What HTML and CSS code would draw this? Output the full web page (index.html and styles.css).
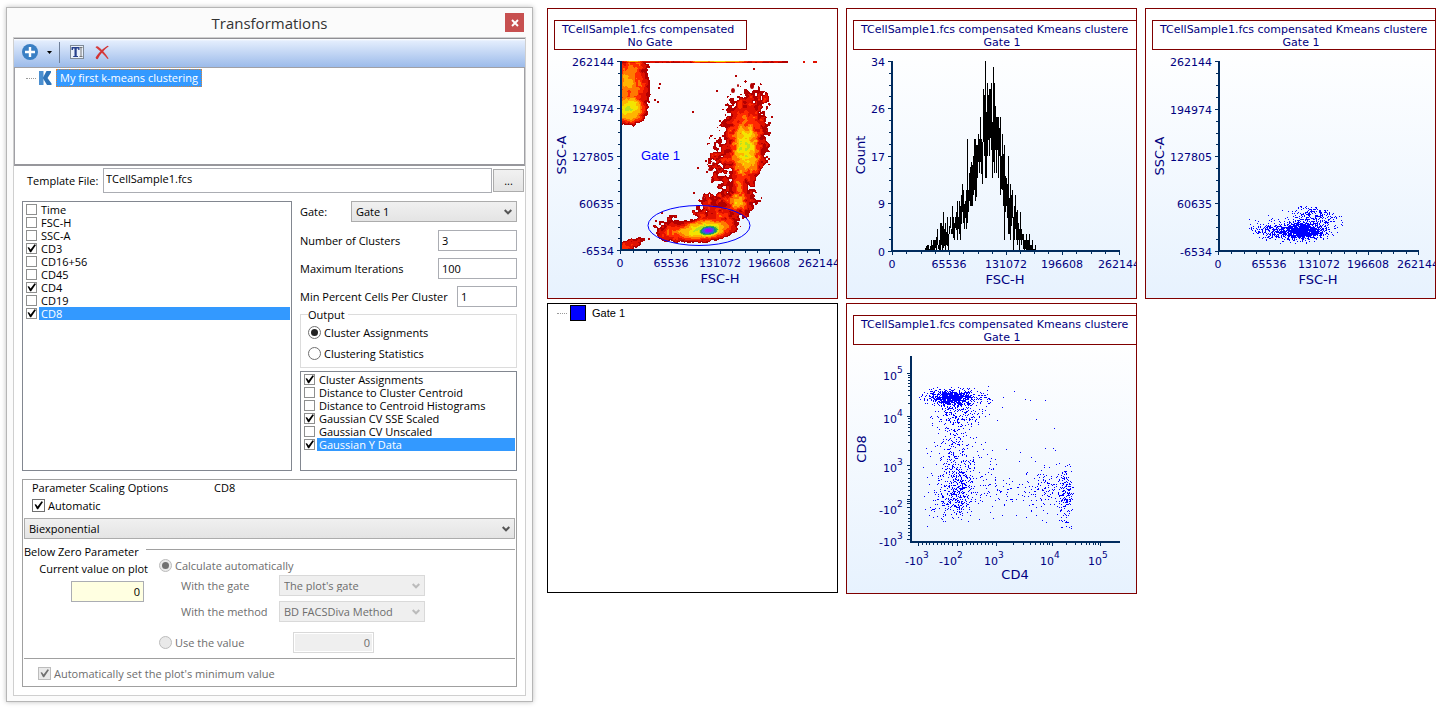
FILE: index.html
```html
<!DOCTYPE html>
<html lang="en">
<head>
<meta charset="utf-8">
<title>Transformations</title>
<link rel="stylesheet" href="styles.css">
</head>
<body>
<main class="workspace">
  <section class="window" aria-labelledby="win-title">
    <header class="titlebar">
      <h1 class="title" id="win-title">Transformations</h1>
      <button class="close" type="button" aria-label="Close">
        <svg width="8" height="8" viewBox="0 0 8 8"><path d="M1 1L7 7M7 1L1 7" stroke="#fff" stroke-width="1.9"/></svg>
      </button>
    </header>
    <div class="frame">
      <div class="toolbar">
        <button class="tool" type="button" aria-label="Add">
          <svg width="16" height="16" viewBox="0 0 16 16"><circle cx="8" cy="8" r="8" fill="#3a7fc4"/><path d="M8 3v10M3 8h10" stroke="#fff" stroke-width="2.4"/></svg>
        </button>
        <button class="tool tool-caret" type="button" aria-label="Add menu">
          <svg width="5" height="3" viewBox="0 0 5 3"><path d="M0 0h5L2.500 3z" fill="#000"/></svg>
        </button>
        <span class="separator"></span>
        <button class="tool tool-rename" type="button" aria-label="Rename">
          <svg width="14" height="14" viewBox="0 0 14 14"><rect x=".5" y=".5" width="13" height="13" fill="#e9f0fa" stroke="#7f8a96"/><path d="M1.500 2h8v3H8.200V3.500H6.700V11H8v1H3.200v-1h1.300V3.500H3V5H1.500z" fill="#27408b"/><path d="M9.500 2.500h3M9.500 11.500h3M11 2.500v9" stroke="#777" fill="none"/></svg>
        </button>
        <button class="tool tool-delete" type="button" aria-label="Delete">
          <svg width="14" height="15" viewBox="0 0 14 15"><path d="M.5 2.200Q1.500 .6 3 1.400C6.500 3.800 10.500 8 13.600 13.400L12.600 14C9.500 10 5 5.500 .5 2.200z" fill="#d63a3a"/><path d="M13.800 1.200L12.600 .8C8.500 3 3 8.500 .6 12.600Q1 14.600 2.800 14C5 9.500 9 4.500 13.800 1.200z" fill="#d23434"/></svg>
        </button>
      </div>
      <div class="tree">
        <div class="tree-row">
          <span class="branch"></span>
          <svg class="k-icon" width="13" height="14" viewBox="0 0 13 14"><path d="M0 0h4.500v14H0z" fill="#4b8fd0"/><path d="M7.500 0H12v1.500L8.500 7l4 5.500V14H8L3.800 7z" fill="#2f74b8"/></svg>
          <span class="tree-label">My first k-means clustering</span>
        </div>
      </div>
      <div class="template">
        <label for="template">Template File:</label>
        <input class="box template-file" id="template" type="text" value="TCellSample1.fcs">
        <button class="browse" type="button">...</button>
      </div>

      <div class="settings">
        <div class="checklist">
          <label class="item"><input type="checkbox"><span>Time</span></label>
          <label class="item"><input type="checkbox"><span>FSC-H</span></label>
          <label class="item"><input type="checkbox"><span>SSC-A</span></label>
          <label class="item"><input type="checkbox" checked><span>CD3</span></label>
          <label class="item"><input type="checkbox"><span>CD16+56</span></label>
          <label class="item"><input type="checkbox"><span>CD45</span></label>
          <label class="item"><input type="checkbox" checked><span>CD4</span></label>
          <label class="item"><input type="checkbox"><span>CD19</span></label>
          <label class="item selected"><input type="checkbox" checked><span>CD8</span></label>
        </div>
        <div class="options">
          <div class="field"><label for="gate">Gate:</label><select class="combo gate-combo" id="gate"><option>Gate 1</option></select></div>
          <div class="field"><label for="clusters">Number of Clusters</label><input class="box number" id="clusters" type="text" value="3"></div>
          <div class="field"><label for="iterations">Maximum Iterations</label><input class="box number" id="iterations" type="text" value="100"></div>
          <div class="field"><label for="percent">Min Percent Cells Per Cluster</label><input class="box number short" id="percent" type="text" value="1"></div>
          <fieldset class="output">
            <legend>Output</legend>
            <label class="choice"><input type="radio" name="output" checked>Cluster Assignments</label>
            <label class="choice"><input type="radio" name="output">Clustering Statistics</label>
          </fieldset>
          <div class="checklist outputs">
            <label class="item"><input type="checkbox" checked><span>Cluster Assignments</span></label>
            <label class="item"><input type="checkbox"><span>Distance to Cluster Centroid</span></label>
            <label class="item"><input type="checkbox"><span>Distance to Centroid Histograms</span></label>
            <label class="item"><input type="checkbox" checked><span>Gaussian CV SSE Scaled</span></label>
            <label class="item"><input type="checkbox"><span>Gaussian CV Unscaled</span></label>
            <label class="item selected"><input type="checkbox" checked><span>Gaussian Y Data</span></label>
          </div>
        </div>
      </div>

      <div class="scaling">
        <div class="scaling-head"><span class="scaling-title">Parameter Scaling Options</span><span>CD8</span></div>
        <label class="choice automatic"><input type="checkbox" checked>Automatic</label>
        <select class="combo scale-combo" aria-label="Scale"><option>Biexponential</option></select>
        <div class="rule-head"><span>Below Zero Parameter</span></div>
        <div class="below">
          <div class="current">
            <label for="current">Current value on plot</label>
            <input class="box current-value" id="current" type="text" value="0">
          </div>
          <div class="method">
            <label class="choice"><input type="radio" name="below" checked disabled>Calculate automatically</label>
            <div class="method-row"><label for="with-gate">With the gate</label><select class="combo" id="with-gate" disabled><option>The plot's gate</option></select></div>
            <div class="method-row"><label for="with-method">With the method</label><select class="combo" id="with-method" disabled><option>BD FACSDiva Method</option></select></div>
            <div class="value-row"><label class="choice"><input type="radio" name="below" disabled>Use the value</label><input class="box fixed-value" type="text" value="0" aria-label="Value" disabled></div>
          </div>
        </div>
        <label class="choice minimum"><input type="checkbox" checked disabled>Automatically set the plot's minimum value</label>
      </div>
    </div>
  </section>

  <section class="plots">
    <svg class="plot" id="density" viewBox="7 8 291 291" role="img" aria-label="SSC-A against FSC-H, no gate"></svg>
    <svg class="plot" id="histogram" viewBox="5 8 291 291" role="img" aria-label="FSC-H histogram"></svg>
    <svg class="plot" id="scatter" viewBox="5 8 291 291" role="img" aria-label="SSC-A against FSC-H, Gate 1"></svg>
    <div class="gates">
      <div class="gate-row"><span class="branch"></span><span class="swatch"></span><span>Gate 1</span></div>
    </div>
    <svg class="plot" id="biex" viewBox="4 3 291 291" role="img" aria-label="CD8 against CD4, Gate 1"></svg>
  </section>
</main>
<script src="plots.js"></script>
</body>
</html>
```
FILE: styles.css
```css
* { box-sizing: border-box; }
body { margin: 0; background: #fff; color: #000; font: 11px/13px "Open Sans", "Noto Sans", sans-serif; }
button, input, select { font: inherit; color: inherit; margin: 0; }
.workspace { display: grid; grid-template-columns: minmax(0, 527fr) minmax(0, 889fr); align-items: start; gap: 14px; padding: 7px 17px 12px 6px; }

.window { padding: 0 6px 5px; border: 1px solid #b6b6b6; background: #fbfbfb; box-shadow: 0 0 5px rgba(0, 0, 0, .25); }
.titlebar { display: grid; grid-template-columns: 1fr auto 1fr; height: 29px; }
.title { grid-column: 2; margin: 0; font-size: 15px; line-height: 31px; font-weight: 400; color: #333; }
.close { justify-self: end; display: grid; place-items: center; width: 19px; height: 19px; margin: 5px 2px 0 0; padding: 0; border: 0; background: #c75050; }
.frame { border: 1px solid #cfcfcf; background: #fff; }

.toolbar { display: flex; align-items: center; height: 29px; padding: 0 0 2px 8px; border-top: 1px solid #8f8f94; background: linear-gradient(#fff 0, #e3edfd 2px, #9cbbea 100%); }
.tool { display: grid; place-items: center; padding: 0; border: 0; background: none; }
.tool-caret { margin-left: 9px; }
.separator { width: 1px; height: 21px; margin: 0 10px 0 7px; background: #6f7f98; }
.tool-delete { margin-left: 11px; }

.tree { height: 99px; padding: 1px 0 0 11px; border: 1px solid #a0a0a5; border-bottom: 2px solid #97979c; }
.tree-row { display: flex; align-items: center; height: 18px; }
.branch { width: 10px; border-top: 1px dotted #999; }
.k-icon { margin: 0 4px 0 3px; }
.tree-label { padding: 0 3px; border: 1px dotted #d9843b; background: #39f; color: #fff; line-height: 16px; }

.template { display: flex; align-items: center; padding: 2px 1px 0 13px; }
.template label { width: 76px; flex: none; }
.box { min-width: 0; height: 21px; padding: 0 3px; border: 1px solid #abadb3; border-radius: 0; background: #fff; }
.box.template-file { flex: 1; height: 25px; padding: 0 2px 4px; }
.browse { width: 31px; height: 23px; margin-left: 1px; padding: 0; border: 1px solid #acacac; background: linear-gradient(#f1f1f1, #e4e4e4); }

.settings { display: grid; grid-template-columns: 270fr 217fr; gap: 8px; min-height: 278px; padding: 8px 8px 0; }
.checklist { padding: 1px; border: 1px solid #828790; }
.item { display: flex; align-items: center; gap: 2px; height: 13px; padding-left: 2px; }
.item span { flex: 1; padding-left: 2px; line-height: 13px; }
.selected span { background: #39f; color: #fff; }
input[type="checkbox"], input[type="radio"] { appearance: none; flex: none; display: grid; place-items: center; background: #fff; }
input[type="checkbox"] { width: 11px; height: 11px; border: 1px solid #8e8f8f; }
input[type="checkbox"]:checked::after { content: ""; width: 9px; height: 9px; background: #000; clip-path: polygon(6% 38%, 22% 36%, 40% 62%, 84% 4%, 100% 12%, 46% 92%, 34% 92%); }
input[type="radio"] { width: 13px; height: 13px; border: 1px solid #707070; border-radius: 50%; }
input[type="radio"]:checked::after { content: ""; width: 7px; height: 7px; border-radius: 50%; background: #222; }

.options { display: flex; flex-direction: column; }
.field { display: flex; align-items: center; justify-content: space-between; height: 21px; margin-bottom: 7px; }
.field:first-child { margin-bottom: 8px; }
.number { width: 79px; }
.number.short { width: 60px; }
.combo { appearance: none; height: 21px; padding: 0 20px 0 4px; border: 1px solid #acacac; border-radius: 0; background: url("data:image/svg+xml,%3Csvg xmlns='http://www.w3.org/2000/svg' width='8' height='6'%3E%3Cpath d='M.7 1L4 4.300 7.300 1' fill='none' stroke='%23555' stroke-width='2'/%3E%3C/svg%3E") no-repeat right 4px center, linear-gradient(#f0f0f0, #e4e4e4); }
.gate-combo { width: 166px; }
.output { display: flex; flex-direction: column; gap: 8px; min-width: 0; margin: -6px 0 3px; padding: 5px 7px 7px; border: 1px solid #dcdcdc; }
.output legend { padding: 0 3px 0 0; }
.choice { display: flex; align-items: center; gap: 3px; }
.choice input[type="checkbox"] { width: 13px; height: 13px; border-color: #707070; }
.outputs { flex: 1; }

.scaling { display: flex; flex-direction: column; margin: 8px 8px; padding: 1px; border: 1px solid #a0a0a0; }
.scaling-head { display: flex; padding: 0 8px 5px; }
.scaling-title { width: 182px; }
.automatic { padding: 0 8px; }
.scale-combo { width: 100%; margin-top: 6px; }
.rule-head { display: flex; align-items: center; gap: 7px; margin-top: 6px; }
.rule-head::after { content: ""; flex: 1; height: 1px; margin-bottom: 4px; background: #a0a0a0; }
.below { display: flex; min-height: 101px; border-bottom: 1px solid #a0a0a0; color: #6d6d6d; }
.current { display: flex; flex-direction: column; align-items: flex-end; gap: 6px; width: 124px; padding-top: 4px; color: #000; }
.current-value { width: 73px; margin-right: 4px; background: #ffffe1; text-align: right; }
.method { margin-left: 11px; padding-top: 1px; }
.method .choice { height: 13px; }
.method-row { display: flex; align-items: center; height: 21px; margin: 3px 0 5px; padding-left: 22px; }
.method-row label { width: 98px; }
.method-row .combo { width: 146px; }
.combo:disabled { opacity: 1; color: #6d6d6d; border-color: #d9d9d9; background: url("data:image/svg+xml,%3Csvg xmlns='http://www.w3.org/2000/svg' width='8' height='6'%3E%3Cpath d='M.7 1L4 4.300 7.300 1' fill='none' stroke='%23bbb' stroke-width='2'/%3E%3C/svg%3E") no-repeat right 4px center, #efefef; }
.value-row { display: flex; align-items: center; margin-top: 10px; }
.value-row .choice { width: 134px; }
.fixed-value { width: 81px; border-color: #d9d9d9; background: #efefef; box-shadow: inset 0 0 0 1px #fff; text-align: right; color: #6d6d6d; }
.choice input:disabled { border-color: #bcbcbc; background: #e9e9e9; }
.choice input:disabled:checked::after { background: #707070; }
.minimum { padding: 8px 14px 5px; color: #6d6d6d; }

.plots { display: grid; grid-template-columns: repeat(3, minmax(0, 1fr)); gap: 4px 8px; padding-top: 1px; }
.plot { display: block; width: 100%; aspect-ratio: 1; overflow: hidden; font-family: "DejaVu Sans", Verdana, sans-serif; font-size: 11px; }
.plot text { fill: #000080; white-space: pre; }
.plot .axis-title { font-size: 13px; }
.plot .power { font-size: 9px; }
.plot .gate-name { font: 13px "Liberation Sans", Arial, sans-serif; fill: #00f; }
.gates { margin-bottom: 1px; padding: 1px 9px; border: 1px solid #000; font: 11px/16px "Liberation Sans", Arial, sans-serif; }
.gate-row { display: flex; align-items: center; }
.swatch { width: 16px; height: 16px; margin: 0 6px 0 3px; border: 1px solid #000; background: #00f; }
```
FILE: plots.js
```js
const NS = "http://www.w3.org/2000/svg";
const NAVY = "#002b5e";

let seed = 7;
function rnd() {
  seed = (seed * 1664525 + 1013904223) % 4294967296;
  return seed / 4294967296;
}
function gauss() {
  return Math.sqrt(-2 * Math.log(rnd() + 1e-9)) * Math.cos(2 * Math.PI * rnd());
}
function add(parent, tag, attrs, text) {
  const el = document.createElementNS(NS, tag);
  for (const key in attrs) el.setAttribute(key, attrs[key]);
  if (text !== undefined) el.textContent = text;
  parent.appendChild(el);
  return el;
}
function rect(svg, x, y, width, height, fill) {
  return add(svg, "rect", { x, y, width, height, fill, "shape-rendering": "crispEdges" });
}
function text(svg, x, y, value, anchor, cls) {
  return add(svg, "text", { x, y, "text-anchor": anchor || "middle", class: cls || "label" }, value);
}

function panel(svg, left, top, id) {
  const grad = add(add(svg, "defs", {}), "linearGradient", { id, x1: 0, y1: 0, x2: 0, y2: 1 });
  add(grad, "stop", { offset: 0.12, "stop-color": "#ffffff" });
  add(grad, "stop", { offset: 1, "stop-color": "#e7f2fe" });
  rect(svg, left, top, 291, 291, "url(#" + id + ")");
}
function frame(svg, left, top) {
  add(svg, "rect", { x: left + 0.5, y: top + 0.5, width: 290, height: 290, fill: "none", stroke: "#800000" });
}
function heading(svg, x, y, width, first, second, mid) {
  add(svg, "rect", { x: x + 0.5, y: y + 0.5, width, height: 29, fill: "#fff", stroke: "#800000" });
  text(svg, x + 8, y + 13, first, "start");
  text(svg, mid, y + 26, second);
}
function axes(svg, a) {
  rect(svg, a.x, a.top, 2, a.y - a.top + 2, NAVY);
  rect(svg, a.x, a.y, a.right - a.x + 1, 2, NAVY);
  a.yt.forEach(v => rect(svg, a.x - 3, v, 3, 1, NAVY));
  a.xt.forEach(v => rect(svg, v, a.y + 2, 1, 3, NAVY));
  a.ym.forEach(v => rect(svg, a.x - 2, Math.round(v), 2, 1, NAVY));
  a.xm.forEach(v => rect(svg, Math.round(v), a.y + 2, 1, 2, NAVY));
}
function quarters(ticks) {
  const out = [];
  for (let i = 0; i + 1 < ticks.length; i++)
    for (let k = 1; k < 4; k++) out.push(ticks[i] + (ticks[i + 1] - ticks[i]) * k / 4);
  return out;
}
function linear(svg, a) {
  a.ym = quarters(a.yt);
  a.xm = quarters(a.xt);
  axes(svg, a);
  a.yl.forEach((s, i) => text(svg, a.x - 6, a.yt[i] + 5, s, "end"));
  ["0", "65536", "131072", "196608", "262144"].forEach((s, i) => text(svg, a.xt[i], a.y + 18, s));
}
function titles(svg, xName, x, y, yName, tx, ty) {
  text(svg, x, y, xName, "middle", "axis-title");
  const t = text(svg, 0, 0, yName, "middle", "axis-title");
  t.setAttribute("transform", "translate(" + tx + " " + ty + ") rotate(-90)");
}
function dots(svg, pts) {
  const seen = new Set();
  let d = "";
  pts.forEach(p => {
    const x = Math.round(p[0]), y = Math.round(p[1]), k = x + "," + y;
    if (seen.has(k)) return;
    seen.add(k);
    d += "M" + x + " " + y + "h1v1h-1z";
  });
  add(svg, "path", { d, fill: "#0000ff", "shape-rendering": "crispEdges" });
}
function cloud(pts, n, cx, cy, sx, sy, ok) {
  for (let i = 0; i < n; i++) {
    const p = [cx + gauss() * sx, cy + gauss() * sy];
    if (!ok || ok(p[0], p[1])) pts.push(p);
  }
}

const YL = ["262144", "194974", "127805", "60635", "-6534"];
const LONG = "TCellSample1.fcs compensated Kmeans clustere";

/* Density plot */
function noiseGrid(step) {
  const g = [];
  for (let i = 0; i < 6400; i++) g.push(rnd() * 2 - 1);
  const s = t => t * t * (3 - 2 * t);
  return (x, y) => {
    const u = x / step, v = y / step, i = Math.floor(u), j = Math.floor(v);
    const a = s(u - i), b = s(v - j), at = (m, n) => g[((n % 80) * 80) + (m % 80)];
    return (at(i, j) * (1 - a) + at(i + 1, j) * a) * (1 - b) + (at(i, j + 1) * (1 - a) + at(i + 1, j + 1) * a) * b;
  };
}
function drawDensity() {
  const svg = document.getElementById("density");
  panel(svg, 7, 8, "bg1");
  heading(svg, 14, 20, 192, "TCellSample1.fcs compensated", "No Gate", 110);
  const fine = noiseGrid(2.6), coarse = noiseGrid(5);
  const colors = ["#b20000", "#e01000", "#ff2a00", "#ff7800", "#ffb400", "#f4e400", "#b9e020", "#3cae3c", "#128a7c", "#2f62d8", "#5a3cf0", "#a000ff"];
  /* cx, cy, rx, ry, peak, edge roughness, lean, falloff */
  const blobs = [
    [88, 108, 20, 17, 5.9, 1.1, 0, 2],
    [88, 88, 21, 36, 3.3, 1.1, 0, 2.4],
    [90, 80, 17, 26, 4.0, 1.2, 0, 2],
    [88, 66, 20, 14, 2.2, 1.4, 0, 3],
    [205, 148, 18, 40, 5.7, 1.5, 0, 2],
    [205, 138, 23, 48, 3.1, 1.7, 0, 2],
    [187, 158, 16, 26, 1.0, 2.3, 0, 2],
    [209, 100, 16, 14, 1.1, 2.2, 0, 2],
    [197, 201, 12, 12, 4.6, 1.5, -0.2, 2],
    [196, 203, 21, 16, 2.4, 1.7, -0.2, 2],
    [199, 185, 9, 22, 2.6, 1.2, 0, 2],
    [172, 208, 18, 15, 1.2, 2.4, -0.2, 2],
    [164, 229, 34, 13, 7.0, 1.0, -0.13, 1.5],
    [168, 230, 16, 8, 11.8, 0.5, -0.1, 1.5],
    [150, 230, 36, 11, 3.8, 1.2, -0.12, 2],
    [178, 220, 24, 13, 2.2, 1.4, -0.2, 2],
    [128, 226, 12, 9, 1.0, 2.2, 0, 2],
    [88, 245, 15, 6, 2.2, 1.4, -0.35, 2]
  ];
  const paths = colors.map(() => "");
  for (let y = 61; y < 249; y++) {
    let run = 0, last = -1;
    for (let x = 82; x <= 280; x++) {
      let best = -1;
      const nf = fine(x, y), nc = coarse(x, y);
      blobs.forEach(b => {
        const dx = (x - b[0]) / b[2], dy = (y - b[1] - (x - b[0]) * b[6]) / b[3];
        const d = Math.sqrt(dx * dx + dy * dy);
        if (d > 1.4) return;
        const v = b[4] * (1 - Math.pow(d, b[7])) + (nf * 0.65 + nc * 0.5) * b[5];
        if (v > best) best = v;
      });
      if (y < 63) {
        const bright = Math.max(0, 1 - Math.abs(x - 178) / 40) * 4 + Math.max(0, 1 - Math.abs(x - 92) / 10) * 3;
        const span = x < 225 ? 1 : Math.max(0, 1 - (x - 225) / 40);
        best = (y === 61 ? 1.6 + bright : 0.9 + bright * 0.3) * span + (nc + nf) * 0.8;
        if (x > 247) best = -1;
        if (x > 262 && (x < 265 || (x > 272 && x < 277))) best = 1;
      }
      const level = x === 280 || best <= 0 ? -1 : Math.min(11, Math.floor(best));
      if (level !== last) {
        if (last >= 0) paths[last] += "M" + run + " " + y + "h" + (x - run) + "v1h" + (run - x) + "z";
        run = x;
        last = level;
      }
    }
  }
  paths.forEach((d, i) => { if (d) add(svg, "path", { d, fill: colors[i], "shape-rendering": "crispEdges" }); });
  [[119, 83], [118, 87], [114, 99], [117, 101], [152, 111], [176, 90], [179, 120], [195, 75], [213, 68], [231, 116], [157, 167], [166, 171], [219, 200], [115, 220], [121, 212], [108, 238], [153, 192], [165, 160]]
    .forEach(p => rect(svg, p[0], p[1], 2, 2, "#b20000"));
  [[210, 83, 4, 6], [191, 88, 4, 5], [197, 84, 2, 3], [188, 107, 4, 4], [168, 168, 5, 3], [172, 162, 3, 4], [171, 178, 3, 4], [162, 196, 3, 5]]
    .forEach(p => add(svg, "ellipse", { cx: p[0] + p[2] / 2, cy: p[1] + p[3] / 2, rx: p[2] / 2, ry: p[3] / 2, fill: "#b20000" }));
  linear(svg, { x: 80, y: 249, top: 61, right: 279, yt: [61, 108, 156, 203, 250], xt: [80, 131, 180, 229, 279], yl: YL });
  titles(svg, "FSC-H", 180, 283, "SSC-A", 26, 155);
  add(svg, "ellipse", { cx: 159, cy: 225.5, rx: 51, ry: 20, fill: "none", stroke: "#0000ff" });
  text(svg, 101, 160, "Gate 1", "start", "gate-name");
  frame(svg, 7, 8);
}

/* Histogram: one bar per column, from its high value to its low value */
function drawHistogram() {
  const svg = document.getElementById("histogram");
  panel(svg, 5, 8, "bg2");
  heading(svg, 12, 20, 300, LONG, "Gate 1", 161);
  const high = [
    248, 246, 245, 245, 249, 246, 240, 245, 240, 240, 240, 237, 229, 245, 240, 223, 223, 226, 212, 229,
    223, 232, 217, 234, 226, 217, 229, 206, 217, 223, 217, 212, 201, 217, 201, 206, 195, 184, 190, 204,
    201, 190, 139, 190, 173, 167, 162, 165, 156, 139, 139, 145, 145, 134, 139, 117, 139, 142, 89, 95,
    61, 112, 83, 95, 89, 89, 83, 122, 67, 83, 106, 117, 117, 117, 128, 117, 156, 134, 154, 145,
    176, 178, 184, 156, 198, 184, 195, 190, 217, 206, 195, 212, 210, 223, 229, 212, 229, 234, 234, 240,
    240, 234, 240, 240, 234, 245, 245, 240, 249, 249, 245
  ];
  const low = [
    251, 251, 251, 251, 251, 251, 251, 251, 251, 251, 248, 250, 245, 249, 251, 250, 245, 250, 248, 246,
    250, 245, 246, 250, 234, 228, 234, 234, 238, 240, 228, 230, 240, 229, 234, 240, 224, 212, 223, 229,
    218, 229, 223, 212, 201, 206, 206, 206, 195, 190, 201, 197, 178, 162, 173, 162, 174, 184, 142, 156,
    178, 178, 156, 140, 156, 138, 150, 178, 162, 173, 150, 173, 150, 178, 156, 195, 189, 190, 206, 240,
    212, 206, 218, 234, 234, 240, 226, 218, 250, 240, 229, 240, 245, 240, 250, 240, 245, 240, 249, 250,
    249, 250, 250, 251, 251, 251, 251, 251, 251, 251, 251
  ];
  let d = "";
  high.forEach((h, i) => {
    const lo = Math.max(low[i], h + 1);
    d += "M" + (84 + i) + " " + h + "h1v" + (lo - h) + "h-1z";
  });
  add(svg, "path", { d, fill: "#000", "shape-rendering": "crispEdges" });
  linear(svg, { x: 50, y: 250, top: 61, right: 278, yt: [61, 108, 156, 203, 251], xt: [51, 108, 165, 221, 278], yl: ["34", "26", "17", "9", "0"] });
  titles(svg, "FSC-H", 164, 284, "Count", 24, 155);
  frame(svg, 5, 8);
}

function drawScatter() {
  const svg = document.getElementById("scatter");
  panel(svg, 5, 8, "bg3");
  heading(svg, 12, 20, 300, LONG, "Gate 1", 161);
  const pts = [[109, 219], [110, 224], [112, 230], [201, 216], [202, 222], [197, 227]];
  const inside = (x, y) => Math.pow((x - 156) / 48, 2) + Math.pow((y - 225) / 20, 2) < 1;
  cloud(pts, 900, 163, 230, 10, 4, inside);
  cloud(pts, 450, 154, 231, 17, 5, inside);
  cloud(pts, 130, 132, 231, 11, 6, inside);
  cloud(pts, 160, 177, 213, 13, 4, inside);
  cloud(pts, 170, 174, 222, 16, 7, inside);
  dots(svg, pts);
  linear(svg, { x: 78, y: 250, top: 61, right: 278, yt: [61, 109, 156, 203, 251], xt: [78, 129, 179, 228, 278], yl: YL });
  titles(svg, "FSC-H", 178, 284, "SSC-A", 24, 156);
  frame(svg, 5, 8);
}

function power(svg, x, y, base, exp) {
  text(svg, x, y, base, "end");
  text(svg, x, y - 7, exp, "start", "power");
}
function drawBiex() {
  const svg = document.getElementById("biex");
  panel(svg, 4, 3, "bg4");
  heading(svg, 11, 15, 300, LONG, "Gate 1", 160);
  const pts = [[146, 86], [172, 91], [183, 99], [188, 100], [203, 100], [194, 119], [212, 128], [203, 148], [211, 148], [213, 150], [178, 152], [193, 161], [161, 97], [160, 107], [155, 120], [164, 149], [85, 226], [137, 219], [184, 217], [77, 97], [160, 215]];
  const field = (x, y) => x > 78 && x < 150 && y > 85 && y < 222;
  cloud(pts, 420, 108, 97, 9, 3, field);
  cloud(pts, 420, 112, 97, 16, 4, field);
  cloud(pts, 170, 114, 104, 11, 6, field);
  cloud(pts, 110, 116, 117, 14, 6, field);
  for (let i = 0; i < 190; i++) pts.push([115 + gauss() * 9, 118 + rnd() * 55]);
  for (let i = 0; i < 45; i++) pts.push([84 + rnd() * 70, 140 + rnd() * 40]);
  cloud(pts, 370, 115, 190, 9, 13, field);
  cloud(pts, 150, 113, 192, 15, 15, field);
  for (let i = 0; i < 110; i++) pts.push([138 + rnd() * 72, 188 + gauss() * 11]);
  cloud(pts, 75, 201, 192, 8, 11);
  const right = (x, y) => x < 231 && y > 162 && y < 232;
  cloud(pts, 150, 224, 190, 4, 12, right);
  cloud(pts, 75, 223, 202, 5, 17, right);
  dots(svg, pts);
  const xm = [], ym = [];
  for (let k = 2; k < 10; k++) {
    const l = Math.log10(k);
    ym.push(116 - 43 * l, 165 - 49 * l, 203 - 38 * (k - 1) / 9, 207 + 32 * (k - 1) / 9);
    xm.push(154 + 56 * l, 210 + 48 * l, 120 + 34 * (k - 1) / 9, 76 + 34 * (k - 1) / 9);
  }
  axes(svg, { x: 68, y: 241, top: 56, right: 277, yt: [73, 116, 165, 199, 201, 203, 207, 239], xt: [76, 110, 115, 120, 154, 210, 258], ym, xm });
  [["10", "5", 80], ["10", "4", 123], ["10", "3", 172], ["-10", "2", 214], ["-10", "3", 246]].forEach(l => power(svg, 55, l[2], l[0], l[1]));
  [["-10", "3", 81], ["-10", "2", 115], ["10", "3", 156], ["10", "4", 212], ["10", "5", 260]].forEach(l => power(svg, l[2], 265, l[0], l[1]));
  titles(svg, "CD4", 173, 279, "CD8", 24, 149);
  frame(svg, 4, 3);
}

drawDensity();
drawHistogram();
drawScatter();
drawBiex();
```
